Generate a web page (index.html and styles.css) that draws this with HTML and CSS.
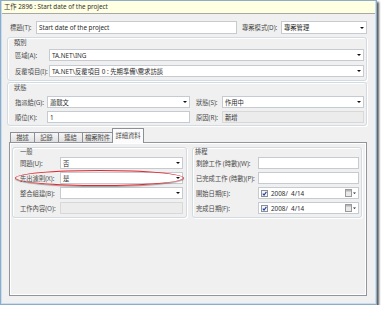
FILE: index.html
```html
<!DOCTYPE html>
<html>
<head>
  <title>工作 2896 : Start date of the project</title>
  <link rel="stylesheet" href="styles.css">
</head>
<body>
  <div class="window">
    <div class="titlebar">工作 2896 : Start date of the project</div>
    <div class="form">
      <div class="row head-row">
        <span class="label label-title">標題(T):</span>
        <div class="field field-title">Start date of the project</div>
        <span class="label label-mode">專案模式(D):</span>
        <div class="field combo">專案管理<span class="arrow"></span></div>
      </div>

      <div class="group group-class">
        <div class="group-name">類別</div>
        <div class="row">
          <span class="label">區域(A):</span>
          <div class="field combo">TA.NET\ING<span class="arrow"></span></div>
        </div>
        <div class="row">
          <span class="label">反覆項目(I):</span>
          <div class="field combo">TA.NET\反覆項目 0 : 先期準備\需求訪談<span class="arrow"></span></div>
        </div>
      </div>

      <div class="group group-state">
        <div class="group-name">狀態</div>
        <div class="row">
          <span class="label">指派給(G):</span>
          <div class="field combo field-left">蕭戢文<span class="arrow"></span></div>
          <span class="label label-right">狀態(S):</span>
          <div class="field combo">作用中<span class="arrow"></span></div>
        </div>
        <div class="row">
          <span class="label">順位(K):</span>
          <div class="field field-left">1</div>
          <span class="label label-right">原因(R):</span>
          <div class="field field-readonly">新增</div>
        </div>
      </div>

      <div class="tabs">
        <div class="tab">描述</div>
        <div class="tab">記錄</div>
        <div class="tab">連結</div>
        <div class="tab tab-wide">檔案附件</div>
        <div class="tab tab-active">詳細資料</div>
      </div>
      <div class="panel">
        <div class="group group-general">
          <div class="group-name">一般</div>
          <div class="row">
            <span class="label">問題(U):</span>
            <div class="field combo">否<span class="arrow"></span></div>
          </div>
          <div class="row row-marked">
            <span class="label">先出濾則(X):</span>
            <div class="field combo">是<span class="arrow"></span></div>
          </div>
          <div class="row">
            <span class="label">整合組建(B):</span>
            <div class="field combo"><span class="arrow"></span></div>
          </div>
          <div class="row">
            <span class="label">工作內容(O):</span>
            <div class="field field-readonly"></div>
          </div>
        </div>

        <div class="group group-schedule">
          <div class="group-name">排程</div>
          <div class="row">
            <span class="label">剩餘工作 (時數)(W):</span>
            <div class="field"></div>
          </div>
          <div class="row">
            <span class="label">已完成工作 (時數)(P):</span>
            <div class="field"></div>
          </div>
          <div class="row">
            <span class="label">開始日期(E):</span>
            <div class="field date">
              <svg class="check" width="7" height="7" viewBox="0 0 7 7">
                <rect x="0.5" y="0.5" width="6" height="6" fill="#f4f6fa" stroke="#8a8f98"/>
                <path d="M1.8 3.6 L3 5 L5.4 1.8" fill="none" stroke="#1f3f9a" stroke-width="1.1"/>
              </svg>
              <span>2008/&nbsp; 4/14</span>
              <svg class="cal" width="11" height="8" viewBox="0 0 11 8">
                <rect x="0.5" y="0.5" width="6" height="7" fill="#e9e9e9" stroke="#9a9a9a"/>
                <rect x="1" y="1" width="5" height="1.5" fill="#b5b5b5"/>
                <path d="M8 3.5 H11 L9.5 5 Z" fill="#222"/>
              </svg>
            </div>
          </div>
          <div class="row">
            <span class="label">完成日期(F):</span>
            <div class="field date">
              <svg class="check" width="7" height="7" viewBox="0 0 7 7">
                <rect x="0.5" y="0.5" width="6" height="6" fill="#f4f6fa" stroke="#8a8f98"/>
                <path d="M1.8 3.6 L3 5 L5.4 1.8" fill="none" stroke="#1f3f9a" stroke-width="1.1"/>
              </svg>
              <span>2008/&nbsp; 4/14</span>
              <svg class="cal" width="11" height="8" viewBox="0 0 11 8">
                <rect x="0.5" y="0.5" width="6" height="7" fill="#e9e9e9" stroke="#9a9a9a"/>
                <rect x="1" y="1" width="5" height="1.5" fill="#b5b5b5"/>
                <path d="M8 3.5 H11 L9.5 5 Z" fill="#222"/>
              </svg>
            </div>
          </div>
        </div>
      </div>
    </div>
  </div>
</body>
</html>
```

FILE: styles.css
```css
/* work item form, Vista look */
body {
  margin: 0;
  background: #fff;
  font-family: "Noto Sans", "Noto Sans CJK TC", sans-serif;
  font-size: 6.3px;
  color: #4a4a4a;
}
.window {
  width: 377px;
  height: 305px;
  box-sizing: border-box;
  border: 1px solid #8eabc8;
  padding: 0 1px 1px 1px;
  background: #c9ddf1;
  box-shadow: 2px 2px 2px rgba(0, 0, 0, 0.65);
  display: flex;
  flex-direction: column;
}
.titlebar {
  height: 12px;
  line-height: 12px;
  padding-left: 2px;
  background: #ffffe1;
  border-bottom: 1px solid #a8a8a8;
  color: #333;
  white-space: nowrap;
}
.form {
  flex: 1;
  background: #f0f0f0;
  padding: 7px 8px 0 5px;
}

/* rows and fields */
.row {
  display: flex;
  align-items: center;
  height: 12px;
}
.label {
  flex: none;
  white-space: nowrap;
}
.field {
  flex: 1;
  min-width: 0;
  height: 12px;
  box-sizing: border-box;
  border: 1px solid #c6cad1;
  background: #fff;
  padding-left: 2px;
  display: flex;
  align-items: center;
  color: #2a2a2a;
  white-space: nowrap;
  overflow: hidden;
}
.field-readonly {
  background: #ececec;
  border-color: #d8d8d8;
}
.combo .arrow {
  margin-left: auto;
  margin-right: 2px;
  border-left: 2px solid transparent;
  border-right: 2px solid transparent;
  border-top: 2px solid #111;
}
.head-row {
  height: 13px;
  padding-left: 3px;
}
.head-row .field {
  height: 13px;
}
.label-title {
  width: 26px;
}
.field-title {
  flex: none;
  width: 201px;
}
.label-mode {
  width: 39px;
  padding-left: 5px;
}

/* group boxes */
.group {
  border: 1px solid #d3dbe2;
  border-radius: 3px;
  box-shadow: inset 1px 1px 0 #fff, 1px 1px 0 #fff;
}
.group-name {
  height: 10px;
  line-height: 10px;
  margin-left: -1px;
}
.group-class {
  margin-top: 3px;
  padding: 0 2px 3px 7px;
}
.group-class .row {
  margin-top: 4px;
}
.group-class .group-name + .row {
  margin-top: 1px;
}
.group-class .label {
  width: 34px;
}
.group-state {
  margin-top: 1px;
  padding: 0 2px 2px 7px;
}
.group-state .row {
  margin-top: 3px;
}
.group-state .label {
  width: 32px;
}
.group-state .label-right {
  width: 26px;
  padding-left: 6px;
}
.field-left {
  flex: none;
  width: 143px;
}

/* tabs */
.tabs {
  display: flex;
  align-items: flex-end;
  height: 14px;
  margin: 2px 0 0 2px;
  padding-left: 1px;
}
.tab {
  width: 25px;
  height: 10px;
  box-sizing: border-box;
  border: 1px solid #8c8f96;
  border-bottom: none;
  margin-right: -1px;
  background: linear-gradient(#f6f6f6, #e0e0e0);
  text-align: center;
  line-height: 9px;
  white-space: nowrap;
}
.tab-wide {
  width: 31px;
}
.tab-active {
  width: 32px;
  height: 15px;
  margin-bottom: -1px;
  background: #fbfbfb;
  line-height: 13px;
  position: relative;
  z-index: 1;
}
.panel {
  height: 154px;
  box-sizing: border-box;
  margin-left: 2px;
  border: 1px solid #92959c;
  box-shadow: inset 0 0 0 1px #fff;
  padding: 4px 0 0 2px;
  display: flex;
  align-items: flex-start;
  gap: 5px;
}
.group-general {
  width: 175px;
  box-sizing: border-box;
  padding: 0 3px 3px 7px;
}
.group-schedule {
  width: 170px;
  box-sizing: border-box;
  padding: 0 2px 3px 3px;
}
.panel .group-name {
  height: 8px;
  line-height: 8px;
}
.group-general .group-name {
  margin-left: 0;
}
.panel .row {
  margin-top: 3px;
}
.panel .group-name + .row {
  margin-top: 1px;
}
.group-general .label {
  width: 40px;
}
.group-schedule .label {
  width: 62px;
}
.row-marked {
  position: relative;
}
.row-marked::after {
  content: "";
  position: absolute;
  left: -5px;
  right: -1px;
  top: -2px;
  bottom: -2px;
  border: 1px solid #e2262c;
  border-radius: 50%;
  box-shadow: 0 1px 1px rgba(0, 0, 0, 0.35);
}

/* date picker */
.date .check {
  margin-right: 3px;
}
.date .cal {
  margin-left: auto;
  margin-right: 2px;
}
```
